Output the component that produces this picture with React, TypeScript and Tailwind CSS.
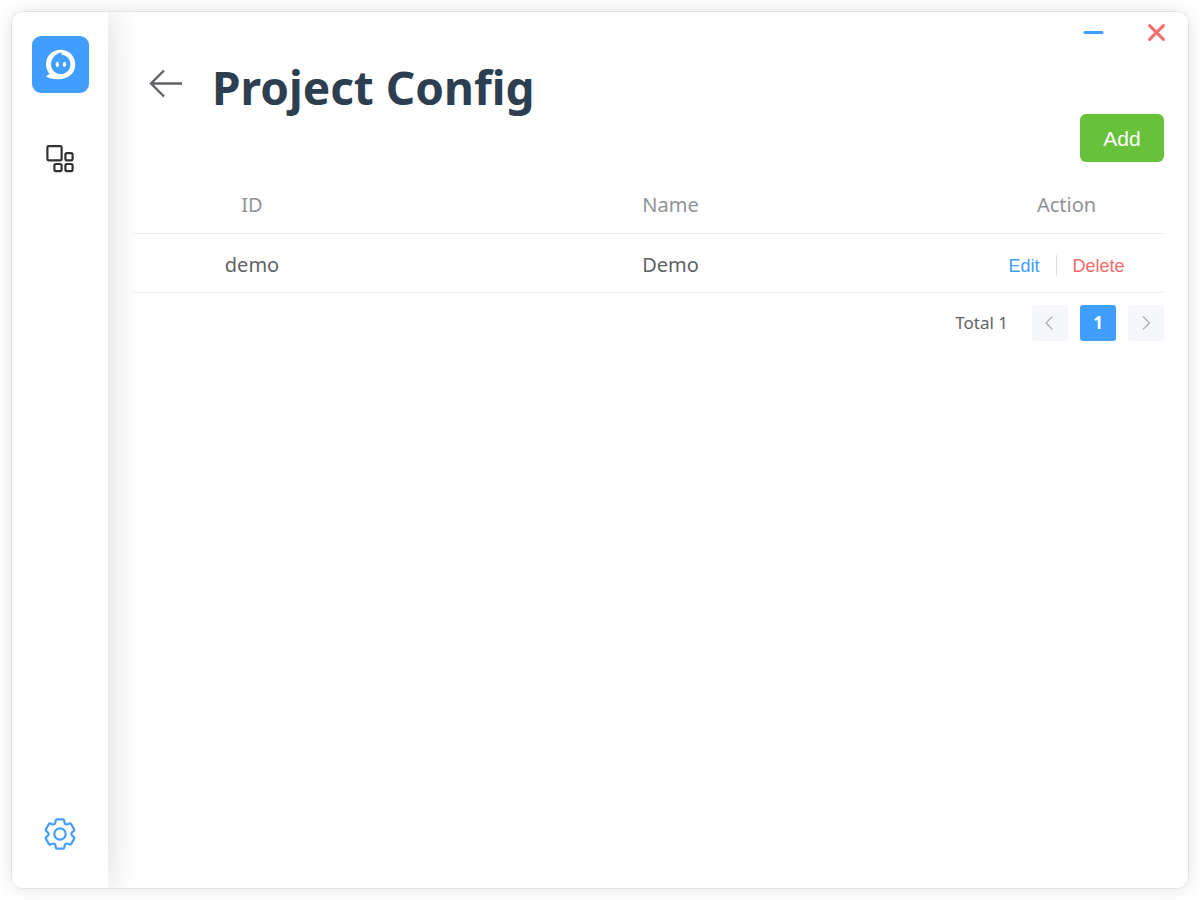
import React from "react";

const gearTooth = (turn: number): string => {
  const a = (turn * Math.PI) / 3;
  const at = (x: number, y: number) =>
    `${(16 + x * Math.cos(a) - y * Math.sin(a)).toFixed(2)} ${(16 + x * Math.sin(a) + y * Math.cos(a)).toFixed(2)}`;
  return [
    `${turn === 0 ? "M" : "L"}${at(-3, -14.6)}`,
    `L${at(3, -14.6)}`,
    `Q${at(4, -14.6)} ${at(4.2, -13.6)}`,
    `L${at(4.5, -11.6)}`,
    `Q${at(4.7, -10.4)} ${at(5.5, -9.9)}`,
    `Q${at(6.3, -9.4)} ${at(7.6, -9.8)}`,
    `L${at(9.6, -10.5)}`,
    `Q${at(10.6, -10.8)} ${at(11.1, -9.9)}`,
  ].join("");
};

const gearPath = [0, 1, 2, 3, 4, 5].map(gearTooth).join("") + "Z";

function Logo() {
  return (
    <svg viewBox="0 0 57 57" className="size-[57px]" aria-hidden="true">
      <path
        fill="#fff"
        fillRule="evenodd"
        d="M28.5 13.8C20.3 13.8 14 20.2 14 28.2C14 32 15.3 35.3 17.4 37.8C16.6 38.9 15.4 39.7 13.8 40.2C16.2 42.3 20.5 43.2 26.5 43.2C36.5 43.2 43.3 37 43.3 28.5C43.3 20.3 37 13.8 28.5 13.8ZM29.6 16.2C29.4 17.2 29.4 18 29.9 18.8C35 19.4 38.4 23.3 38.4 28.4C38.4 33.9 34.2 38 28.8 38C23.3 38 19.1 33.9 19.1 28.4C19.1 22.6 23 17.7 29.6 16.2Z"
      />
      <ellipse cx="25.3" cy="28.4" rx="1.6" ry="2.6" fill="#fff" />
      <ellipse cx="32.5" cy="28.4" rx="1.6" ry="2.6" fill="#fff" />
    </svg>
  );
}

function GridIcon() {
  return (
    <svg viewBox="0 0 32 32" className="size-8" fill="none" stroke="#303133" strokeWidth="2.2" aria-hidden="true">
      <rect x="3.4" y="3.1" width="14.2" height="14.2" rx="1.2" />
      <rect x="21.4" y="10.1" width="7.2" height="7.2" rx="1.6" />
      <rect x="10.4" y="21" width="7.2" height="7.2" rx="1.6" />
      <rect x="21.4" y="21" width="7.2" height="7.2" rx="1.6" />
    </svg>
  );
}

function Sidebar() {
  return (
    <nav className="flex w-24 shrink-0 flex-col items-center bg-white pt-6 pb-[38px] shadow-[0_0_36px_rgba(0,0,0,0.16)]">
      <a href="#home" aria-label="Home" className="rounded-[9px] bg-[#409eff]">
        <Logo />
      </a>
      <a href="#projects" aria-label="Projects" className="mt-[50px]">
        <GridIcon />
      </a>
      <a href="#settings" aria-label="Settings" className="mt-auto">
        <svg viewBox="0 0 32 32" className="size-8" fill="none" stroke="#409eff" strokeWidth="2.2" strokeLinejoin="round" aria-hidden="true">
          <path d={gearPath} />
          <circle cx="16" cy="16" r="5.7" />
        </svg>
      </a>
    </nav>
  );
}

const projects = [{ id: "demo", name: "Demo" }];

export default function App() {
  return (
    <div className="flex min-h-screen bg-white p-3 font-['Noto_Sans','Open_Sans',sans-serif] text-[#606266]">
      <div className="flex flex-1 rounded-xl shadow-[0_0_0_1px_rgba(0,0,0,0.06),0_0_18px_rgba(0,0,0,0.12)]">
        <div className="flex flex-1 overflow-hidden rounded-xl bg-white">
          <Sidebar />
          <main className="flex min-w-0 flex-1 flex-col">
            <div className="flex justify-end gap-8 pt-2 pr-4">
              <button type="button" aria-label="Minimize" className="flex h-6 w-8 items-center justify-center">
                <svg viewBox="0 0 24 24" className="size-6" stroke="#409eff" strokeWidth="3" strokeLinecap="round" aria-hidden="true">
                  <path d="M5 12.5H22" />
                </svg>
              </button>
              <button type="button" aria-label="Close" className="flex h-6 w-8 items-center justify-center">
                <svg viewBox="0 0 24 24" className="size-6" stroke="#f56c6c" strokeWidth="3" strokeLinecap="round" aria-hidden="true">
                  <path d="M5.6 5.6L19.4 19.4M19.4 5.6L5.6 19.4" />
                </svg>
              </button>
            </div>

            <header className="flex items-center gap-7 pt-4 pr-6 pl-10">
              <button type="button" aria-label="Back" className="pb-2">
                <svg viewBox="0 0 36 32" className="h-8 w-9" fill="none" stroke="#606266" strokeWidth="2.4" aria-hidden="true">
                  <path d="M3 16.5H34M16 3.5L3 16.5L16 29.5" />
                </svg>
              </button>
              <h1 className="text-[46px] leading-[54px] font-bold text-[#2c3e50]">Project Config</h1>
            </header>

            <section className="px-6">
              <div className="flex justify-end">
                <button
                  type="button"
                  className="h-12 w-[84px] rounded-md bg-[#67c23a] pt-0.5 font-['Liberation_Sans',sans-serif] text-[21px] text-white"
                >
                  Add
                </button>
              </div>

              <table className="mt-3 w-full table-fixed border-collapse text-center text-[20px] leading-7">
                <thead>
                  <tr className="h-[59px] border-b border-[#ebeef5] text-[#909399]">
                    <th className="w-[240px] pt-1 font-normal">ID</th>
                    <th className="pt-1 font-normal">Name</th>
                    <th className="w-[195px] pt-1 font-normal">Action</th>
                  </tr>
                </thead>
                <tbody>
                  {projects.map((project) => (
                    <tr key={project.id} className="h-[59px] border-b border-[#ebeef5]">
                      <td className="pt-1">{project.id}</td>
                      <td className="pt-1">{project.name}</td>
                      <td className="pt-1">
                        <div className="flex items-center justify-center gap-4 pt-0.5 font-['Liberation_Sans',sans-serif] text-[18px] leading-6">
                          <button type="button" className="text-[#409eff]">Edit</button>
                          <span className="h-[21px] w-px bg-[#dcdfe6]" />
                          <button type="button" className="text-[#f56c6c]">Delete</button>
                        </div>
                      </td>
                    </tr>
                  ))}
                </tbody>
              </table>

              <div className="mt-3 flex items-center justify-end gap-3 text-[17px]">
                <span className="mr-3">Total 1</span>
                <button type="button" disabled aria-label="Previous page" className="flex size-9 items-center justify-center rounded-[3px] bg-[#f5f7fa]">
                  <svg viewBox="0 0 18 18" className="size-[18px]" fill="none" stroke="#a8abb2" strokeWidth="1.2" aria-hidden="true">
                    <path d="M11.5 2.5L5 9L11.5 15.5" />
                  </svg>
                </button>
                <button type="button" aria-current="page" className="size-9 rounded-[3px] bg-[#409eff] font-bold text-white">
                  1
                </button>
                <button type="button" disabled aria-label="Next page" className="flex size-9 items-center justify-center rounded-[3px] bg-[#f5f7fa]">
                  <svg viewBox="0 0 18 18" className="size-[18px]" fill="none" stroke="#a8abb2" strokeWidth="1.2" aria-hidden="true">
                    <path d="M6 2.5L12.5 9L6 15.5" />
                  </svg>
                </button>
              </div>
            </section>
          </main>
        </div>
      </div>
    </div>
  );
}
